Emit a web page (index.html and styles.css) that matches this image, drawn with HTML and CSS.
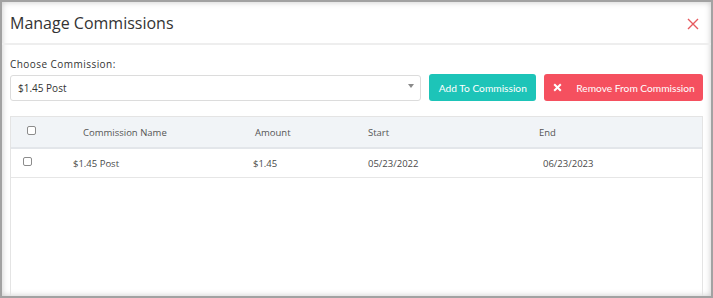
FILE: index.html
```html
<!DOCTYPE html>
<html lang="en">
<head>
    <meta charset="UTF-8">
    <meta name="viewport" content="width=device-width, initial-scale=1.0">
    <title>Manage Commissions</title>
    <link rel="stylesheet" href="styles.css">
</head>
<body>
    <div class="modal">
        <div class="modal-header">
            <h1>Manage Commissions</h1>
            <button class="close" type="button" aria-label="Close">
                <svg width="12" height="12" viewBox="0 0 12 12">
                    <path d="M1 1 L11 11 M11 1 L1 11" stroke="#e65a5f" stroke-width="1.4" fill="none"/>
                </svg>
            </button>
        </div>

        <div class="modal-body">
            <label class="field-label" for="commission">Choose Commission:</label>
            <div class="form-row">
                <div class="select">
                    <span id="commission">$1.45 Post</span>
                    <span class="caret"></span>
                </div>
                <button class="btn btn-add" type="button">Add To Commission</button>
                <button class="btn btn-remove" type="button">
                    <svg width="9" height="9" viewBox="0 0 9 9">
                        <path d="M1.2 1.2 L7.8 7.8 M7.8 1.2 L1.2 7.8" stroke="#fff" stroke-width="2" fill="none"/>
                    </svg>
                    <span>Remove From Commission</span>
                </button>
            </div>

            <div class="grid">
                <div class="grid-head">
                    <div class="cell"><input type="checkbox" class="check"></div>
                    <div class="cell">Commission Name</div>
                    <div class="cell">Amount</div>
                    <div class="cell">Start</div>
                    <div class="cell">End</div>
                </div>
                <div class="grid-row">
                    <div class="cell"><input type="checkbox" class="check"></div>
                    <div class="cell">$1.45 Post</div>
                    <div class="cell">$1.45</div>
                    <div class="cell">05/23/2022</div>
                    <div class="cell">06/23/2023</div>
                </div>
            </div>
        </div>
    </div>
</body>
</html>
```

FILE: styles.css
```css
html, body {
    margin: 0;
    height: 298px;
    overflow: hidden;
}
body {
    background-color: #a2a2a2;
    font-family: "Open Sans", Arial, sans-serif;
    color: #333;
    padding: 2px 2px 2px 2px;
    box-sizing: border-box;
}
.modal {
    background: white;
    height: 294px;
    display: flex;
    flex-direction: column;
    box-shadow: inset 0 0 6px rgba(0,0,0,0.22);
    overflow: hidden;
}
.modal-header {
    height: 41px;
    border-bottom: 2px solid #eeeeee;
    display: flex;
    align-items: center;
    justify-content: space-between;
    padding: 0 12px 0 8px;
    flex-shrink: 0;
}
.modal-header h1 {
    margin: 0;
    font-size: 16px;
    font-weight: 400;
    color: #333;
}
.close {
    background: none;
    border: none;
    padding: 0;
    margin-top: 2px;
    display: flex;
    cursor: pointer;
}
.modal-body {
    padding: 12px 8px 0 8px;
    flex: 1;
    display: flex;
    flex-direction: column;
}
.field-label {
    font-size: 10px;
    letter-spacing: 0.45px;
    color: #333;
    line-height: 15px;
    display: block;
}
.form-row {
    display: flex;
    align-items: center;
    margin-top: 2px;
    gap: 8px;
}
.select {
    width: 412px;
    height: 26px;
    box-sizing: border-box;
    border: 1px solid #dcdcdc;
    border-radius: 3px;
    display: flex;
    align-items: center;
    justify-content: space-between;
    padding: 0 6px 0 7px;
    font-size: 10px;
    color: #333;
}
.caret {
    width: 0;
    height: 0;
    border-left: 3.5px solid transparent;
    border-right: 3.5px solid transparent;
    border-top: 4px solid #8a8a8a;
    margin-top: -3px;
}
.btn {
    height: 27px;
    border: none;
    border-radius: 3px;
    color: white;
    font-family: "Lato", Arial, sans-serif;
    font-size: 10.2px;
    display: flex;
    align-items: center;
    cursor: pointer;
}
.btn-add {
    background-color: #1dc4b8;
    width: 107px;
    justify-content: center;
    padding: 0;
}
.btn-remove {
    background-color: #f5505f;
    width: 159px;
    padding: 0 0 0 9px;
    gap: 14px;
}
.grid {
    margin-top: 15px;
    border: 1px solid #e4e4e4;
    border-bottom: none;
    flex: 1;
    font-size: 9.5px;
    color: #4a4a4a;
}
.grid-head {
    display: grid;
    grid-template-columns: 72px 172px 113px 171px 1fr;
    height: 30px;
    background-color: #f1f4f7;
    border-bottom: 2px solid #e3e6ea;
    align-items: center;
    color: #555;
}
.grid-head .cell:first-child {
    padding-left: 16px;
}
.grid-row {
    display: grid;
    grid-template-columns: 62px 180px 115px 175px 1fr;
    height: 28px;
    border-bottom: 1px solid #e6e6e6;
    align-items: center;
}
.grid-row .cell:first-child {
    padding-left: 12px;
}
.cell {
    display: flex;
    align-items: center;
}
.check {
    appearance: none;
    margin: 0;
    width: 9px;
    height: 9px;
    border: 1px solid #8c8c8c;
    border-radius: 2px;
    background: white;
    margin-top: -3px;
}
```
